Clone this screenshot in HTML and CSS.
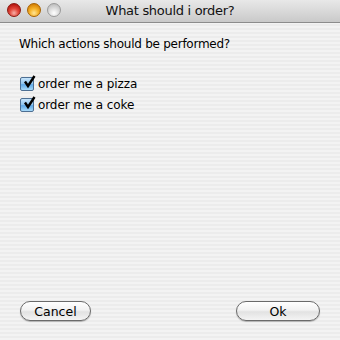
FILE: index.html
```html
<!DOCTYPE html>
<html>
<head>
<meta charset="utf-8">
<link rel="stylesheet" href="styles.css">
</head>
<body>
<div class="window">
  <div class="titlebar">
    <div class="lights">
      <span class="light red"></span>
      <span class="light yellow"></span>
      <span class="light gray"></span>
    </div>
    <div class="title">What should i order?</div>
  </div>
  <div class="content">
    <p class="question">Which actions should be performed?</p>
    <label class="check"><span class="box"><svg viewBox="0 0 14 14" width="14" height="14"><path d="M3 6.5 L6 11 L12.5 1" fill="none" stroke="#000" stroke-width="2.4" stroke-linejoin="miter"/></svg></span>order me a pizza</label>
    <label class="check"><span class="box"><svg viewBox="0 0 14 14" width="14" height="14"><path d="M3 6.5 L6 11 L12.5 1" fill="none" stroke="#000" stroke-width="2.4" stroke-linejoin="miter"/></svg></span>order me a coke</label>
    <div class="spacer"></div>
    <div class="buttons">
      <button class="btn cancel">Cancel</button>
      <button class="btn ok">Ok</button>
    </div>
  </div>
</div>
</body>
</html>
```
FILE: styles.css
```css
html, body {
  margin: 0;
  padding: 0;
}
body {
  width: 340px;
  height: 340px;
  overflow: hidden;
  font-family: "DejaVu Sans", "Liberation Sans", sans-serif;
}
.window {
  width: 340px;
  height: 340px;
  display: flex;
  flex-direction: column;
  background: repeating-linear-gradient(to bottom, #ececec 0px, #ececec 2px, #f3f3f3 2px, #f3f3f3 4px);
}
.titlebar {
  height: 23px;
  flex: none;
  position: relative;
  display: flex;
  align-items: center;
  justify-content: center;
  background: linear-gradient(to bottom, #e8e8e8 0%, #d9d9d9 50%, #c9c9c9 100%);
  border-bottom: 1px solid #8c8c8c;
  box-sizing: border-box;
}
.lights {
  position: absolute;
  left: 7px;
  top: 3px;
  display: flex;
  gap: 6px;
}
.light {
  width: 14px;
  height: 14px;
  border-radius: 50%;
  box-sizing: border-box;
}
.red {
  background: radial-gradient(circle at 50% 75%, #f7b0a8 0%, #e2483c 40%, #b3120c 85%);
  border: 1px solid #8a1810;
}
.yellow {
  background: radial-gradient(circle at 50% 75%, #ffe596 0%, #f6b42b 40%, #d27c00 85%);
  border: 1px solid #a86200;
}
.gray {
  background: radial-gradient(circle at 50% 75%, #ffffff 0%, #dcdcdc 45%, #b8b8b8 90%);
  border: 1px solid #9a9a9a;
}
.title {
  font-size: 13px;
  color: #111;
  letter-spacing: -0.3px;
  margin-top: -1px;
}
.content {
  flex: 1;
  display: flex;
  flex-direction: column;
  padding: 14px 20px 19px 19px;
}
.question {
  margin: 0 0 22px 0;
  font-size: 12px;
  color: #000;
  letter-spacing: -0.25px;
}
.check {
  display: flex;
  align-items: center;
  gap: 4px;
  height: 21px;
  font-size: 12px;
  color: #000;
  letter-spacing: -0.1px;
  margin-left: 1px;
}
.box {
  width: 14px;
  height: 14px;
  box-sizing: border-box;
  border: 1px solid #4d6f93;
  border-radius: 2px;
  background: linear-gradient(to bottom, #c6e4fb 0%, #8fc4ef 50%, #5fa9e9 55%, #a8daf9 100%);
  display: flex;
  overflow: visible;
  position: relative;
}
.box svg {
  position: absolute;
  left: 1px;
  top: -3px;
}
.spacer {
  flex: 1;
}
.buttons {
  display: flex;
  justify-content: space-between;
}
.btn {
  height: 20px;
  border: 1px solid #6a6a6a;
  border-radius: 10px;
  background: linear-gradient(to bottom, #ffffff 0%, #f2f2f2 45%, #e2e2e2 55%, #f4f4f4 100%);
  font-family: "DejaVu Sans", "Liberation Sans", sans-serif;
  font-size: 12.5px;
  color: #000;
  padding: 0;
  box-shadow: 0 1px 1px rgba(0,0,0,0.25);
}
.cancel {
  width: 71px;
  margin-left: 1px;
}
.ok {
  width: 84px;
}
```
